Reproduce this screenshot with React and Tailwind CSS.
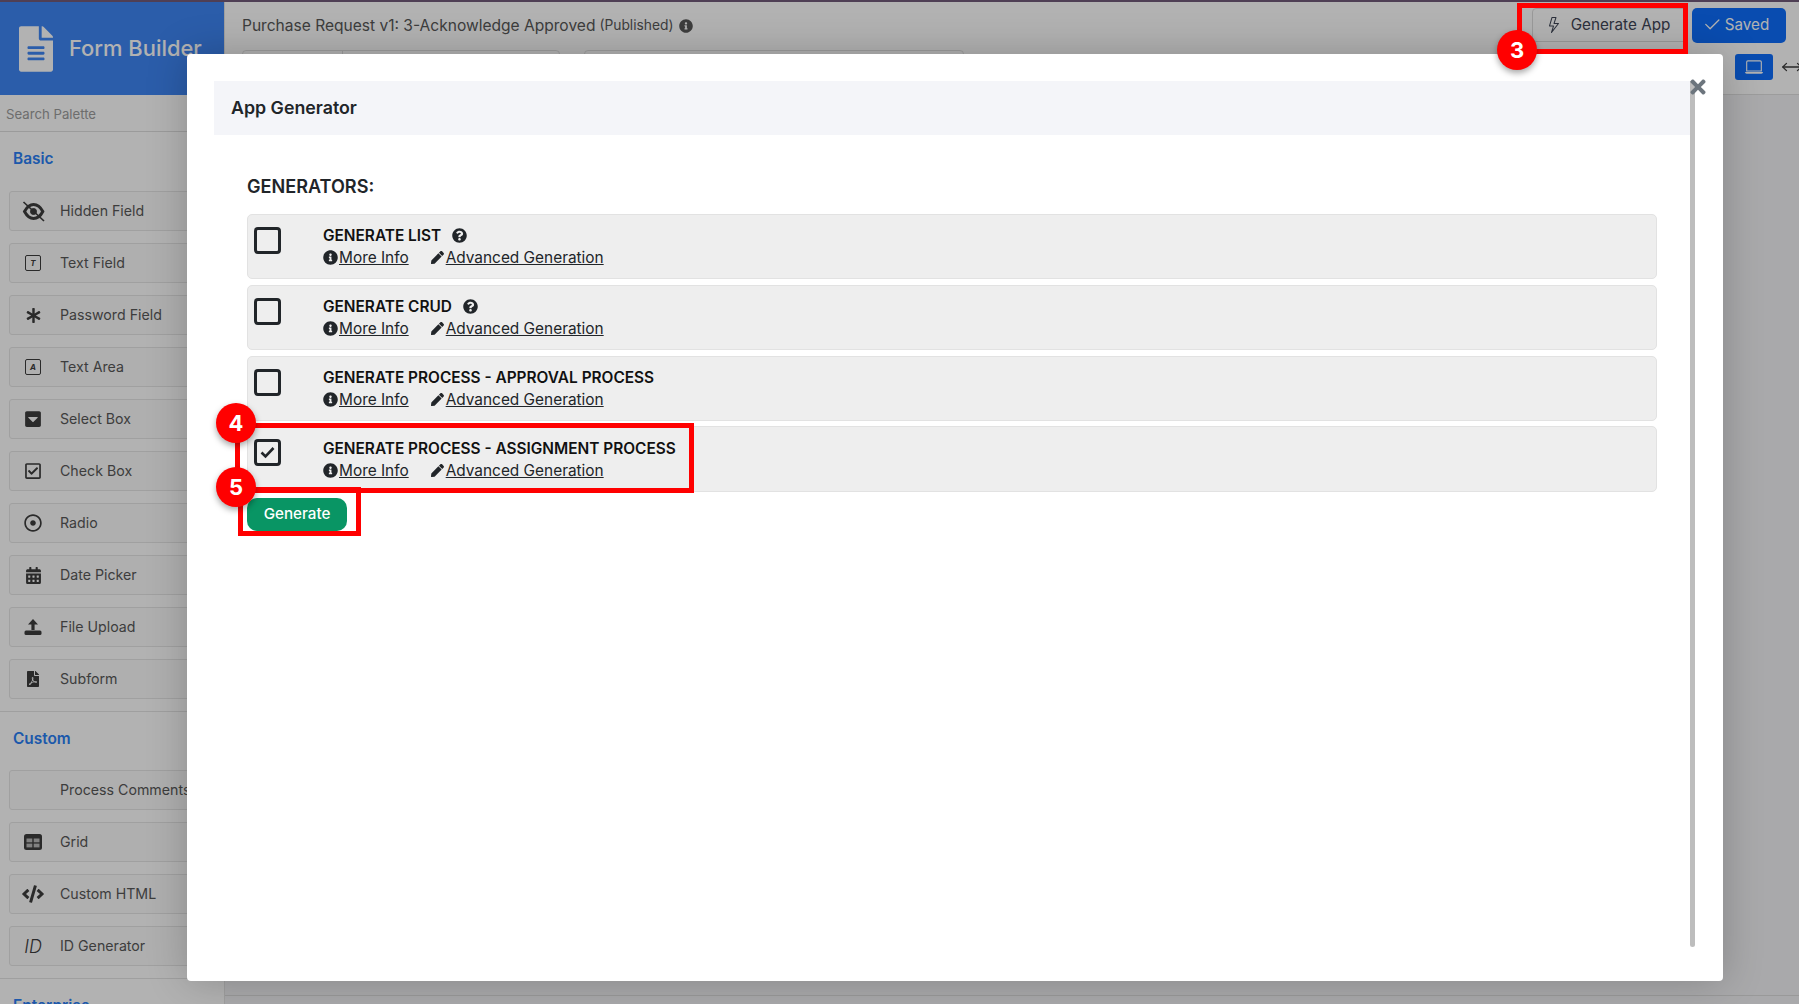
import React from 'react';
import {
  FaFileAlt, FaAsterisk, FaCaretSquareDown, FaRegCheckSquare, FaRegDotCircle,
  FaCalendarAlt, FaFilePdf, FaCode, FaInfoCircle, FaQuestionCircle, FaPen, FaTimes,
} from 'react-icons/fa';
import { BsLightning, BsCheck2, BsLaptop } from 'react-icons/bs';
import { MoveHorizontal } from 'lucide-react';

const BoxLetter = ({ letter }) => (
  <span className="w-[16px] h-[16px] border-[1.5px] border-[#3d3d3d] rounded-[2px] flex items-center justify-center text-[8px] font-bold italic text-[#3d3d3d]">
    {letter}
  </span>
);

const HiddenIcon = () => (
  <svg width="23" height="21" viewBox="0 0 23 21" fill="none" stroke="#3d3d3d">
    <path d="M2.5 10.5 C5.5 5 8.5 3.5 11.5 3.5 C14.5 3.5 18 5 20.8 10.5 C18 16 14.5 17.5 11.5 17.5 C8.5 17.5 5.5 16 2.5 10.5 Z" strokeWidth="3" />
    <circle cx="11.5" cy="10.5" r="3" fill="#3d3d3d" strokeWidth="1" />
    <path d="M1.5 1 L22 20" strokeWidth="1.7" />
  </svg>
);

const UploadIcon = () => (
  <svg width="18" height="18" viewBox="0 0 18 18" fill="#3d3d3d">
    <path d="M9 1 L14 6.5 H10.6 V12 H7.4 V6.5 H4 Z" />
    <rect x="0.5" y="12.5" width="17" height="4.5" rx="1.5" />
  </svg>
);

const GridIcon = () => (
  <svg width="18" height="16" viewBox="0 0 18 16">
    <rect width="18" height="16" rx="2.5" fill="#3d3d3d" />
    <rect x="2.5" y="4.5" width="5.8" height="3.8" fill="#b9b9b9" />
    <rect x="9.7" y="4.5" width="5.8" height="3.8" fill="#b9b9b9" />
    <rect x="2.5" y="9.6" width="5.8" height="3.8" fill="#b9b9b9" />
    <rect x="9.7" y="9.6" width="5.8" height="3.8" fill="#b9b9b9" />
  </svg>
);

const basicItems = [
  { label: 'Hidden Field', icon: <HiddenIcon /> },
  { label: 'Text Field', icon: <BoxLetter letter="T" /> },
  { label: 'Password Field', icon: <FaAsterisk size={15} /> },
  { label: 'Text Area', icon: <BoxLetter letter="A" /> },
  { label: 'Select Box', icon: <FaCaretSquareDown size={18} /> },
  { label: 'Check Box', icon: <FaRegCheckSquare size={18} /> },
  { label: 'Radio', icon: <FaRegDotCircle size={18} /> },
  { label: 'Date Picker', icon: <FaCalendarAlt size={17} /> },
  { label: 'File Upload', icon: <UploadIcon /> },
  { label: 'Subform', icon: <FaFilePdf size={16} /> },
];

const customItems = [
  { label: 'Process Comments', icon: null },
  { label: 'Grid', icon: <GridIcon /> },
  { label: 'Custom HTML', icon: <FaCode size={22} /> },
  { label: 'ID Generator', icon: <span className="text-[18px] italic font-light">ID</span> },
];

const generators = [
  { title: 'GENERATE LIST', help: true },
  { title: 'GENERATE CRUD', help: true },
  { title: 'GENERATE PROCESS - APPROVAL PROCESS' },
  { title: 'GENERATE PROCESS - ASSIGNMENT PROCESS', checked: true },
];

const PaletteItem = ({ item }) => (
  <div className="h-[40px] w-[220px] shrink-0 mb-3 ml-[9px] flex items-center border border-[#e6e6e6] bg-[#fbfbfb] rounded-[3px] text-[#585858] text-[14.2px] whitespace-nowrap">
    <span className="w-[46px] mr-[4px] flex justify-center text-[#3d3d3d]">{item.icon}</span>
    {item.label}
  </div>
);

const Sidebar = () => (
  <aside className="w-[225px] shrink-0 flex flex-col bg-white border-r border-[#e4e4e4] overflow-hidden">
    <div className="h-[93px] shrink-0 bg-[#3e86f4] flex items-center pl-[19px] gap-[16px] text-white">
      <FaFileAlt className="w-[34px] h-[46px] text-white" />
      <span className="text-[21.9px] font-medium whitespace-nowrap">Form Builder</span>
    </div>
    <div className="h-[37px] shrink-0 border-b border-[#dedede] flex items-center pl-[6px] pt-[3px] text-[13.2px] text-[#9c9c9c]">
      Search Palette
    </div>
    <div className="h-[59px] shrink-0 flex items-center pl-[13px] pb-[5px] text-[15.4px] font-semibold text-[#2a7ff5]">Basic</div>
    {basicItems.map(item => <PaletteItem key={item.label} item={item} />)}
    <div className="border-t border-[#e4e4e4] h-[59px] shrink-0 flex items-center pl-[13px] pb-[5px] text-[15.4px] font-semibold text-[#2a7ff5]">Custom</div>
    {customItems.map(item => <PaletteItem key={item.label} item={item} />)}
    <div className="border-t border-[#e4e4e4] pt-[15px] pl-[13px] text-[15.4px] font-semibold text-[#2a7ff5]">Enterprise</div>
  </aside>
);

const TopBar = () => (
  <div className="h-[93px] shrink-0 border-b border-[#e0e0e0] bg-white pl-[17px] pr-[13px] relative">
    <div className="flex items-start justify-between pt-[6px]">
      <div className="pt-[6px] flex items-center text-[15.55px] text-[#585858]">
        Purchase Request v1: 3-Acknowledge Approved
        <span className="text-[13.8px] ml-[4px]">(Published)</span>
        <FaInfoCircle size={14} className="ml-[5px]" />
      </div>
      <div className="flex gap-[5px]">
        <button className="h-[34px] w-[155px] border border-[#dcdcdc] rounded-[4px] flex items-center justify-center gap-[9px] pr-[3px] text-[15.25px] text-[#3f4656]">
          <BsLightning size={16} />
          Generate App
        </button>
        <button className="h-[35px] w-[94px] bg-[#0d6efd] rounded-[5px] flex items-center justify-center gap-[3px] pr-[7px] pb-[1px] text-[15.2px] text-white">
          <BsCheck2 size={20} />
          Saved
        </button>
      </div>
    </div>
    <div className="flex gap-[24px] mt-[7px]">
      <div className="h-[30px] w-[318px] border border-[#e0e0e0] rounded-[4px]">
        <div className="h-full w-[100px] border-r border-[#e0e0e0]" />
      </div>
      <div className="h-[30px] w-[380px] border border-[#e0e0e0] rounded-[4px]" />
    </div>
    <div className="absolute top-[52px] left-[1510px] flex items-center gap-[8px]">
      <span className="w-[38px] h-[26px] shrink-0 bg-[#0d6efd] rounded-[3px] flex items-center justify-center text-white">
        <BsLaptop size={18} />
      </span>
      <MoveHorizontal size={22} strokeWidth={1.4} className="shrink-0 text-[#3d3d3d]" />
    </div>
  </div>
);

const GeneratorRow = ({ gen, last }) => (
  <div className={`flex border border-[#e2e2e2] bg-[#eeeeee] rounded-[5px] pl-[6px] pt-[12px] ${last ? 'h-[66px] -mt-[1px]' : 'h-[65px]'}`}>
    <span className="w-[27px] h-[27px] border-[3px] border-[#212529] rounded-[4px] flex items-center justify-center text-[#212529]">
      {gen.checked && (
        <svg width="15" height="13" viewBox="0 0 15 13" fill="none" stroke="currentColor" strokeWidth="2.6">
          <path d="M1.5 6.5 L5.5 10.5 L13.5 2" />
        </svg>
      )}
    </span>
    <div className={`ml-[42px] text-[#212529] ${last ? '-mt-[1px]' : '-mt-[2px]'}`}>
      <div className="flex items-center h-[22px] text-[15.4px] font-semibold text-[#111]">
        {gen.title}
        {gen.help && <FaQuestionCircle size={15} className="ml-[11px] -mt-[1px] text-[#212529]" />}
      </div>
      <div className="flex items-center h-[21px] text-[15.4px]">
        <FaInfoCircle size={15} />
        <span className="underline ml-[1px]">More Info</span>
        <FaPen size={13} className="ml-[22px]" />
        <span className="underline ml-[2px]">Advanced Generation</span>
      </div>
    </div>
  </div>
);

const Modal = () => (
  <div className="absolute left-[187px] top-[54px] w-[1536px] h-[927px] bg-white rounded-[4px] shadow-[0_0_40px_rgba(0,0,0,0.22)] pt-[27px] pl-[27px] pr-[28px] flex">
    <div className="flex-1">
      <div className="h-[54px] bg-[#f4f5f9] flex items-center pl-[17px] pt-[1px] text-[17.8px] font-semibold text-[#212529]">App Generator</div>
      <div className="pl-[33px] pr-[33px]">
        <div className="h-[79px] pt-[39px] text-[18.1px] font-semibold leading-[24px] text-[#212529]">GENERATORS:</div>
        <div className="flex flex-col gap-[6px]">
          {generators.map((gen, i) => <GeneratorRow key={gen.title} gen={gen} last={i === 3} />)}
        </div>
        <button className="mt-[6px] w-[100px] h-[33px] rounded-[10px] bg-[#099564] text-white text-[15.2px] font-medium">Generate</button>
      </div>
    </div>
    <div className="w-[5px] h-[866px] bg-[#bdbdbd] rounded-b-[3px]" />
    <FaTimes size={22} className="absolute right-[14px] top-[22px] text-[#6c757d]" />
  </div>
);

const Badge = ({ n, className }) => (
  <span className={`absolute w-[40px] h-[40px] rounded-full bg-[#ff0000] text-white text-[22px] font-bold flex items-center justify-center shadow-[0_3px_6px_rgba(0,0,0,0.35)] ${className}`}>
    {n}
  </span>
);

export default function App() {
  return (
    <div className="relative w-full h-screen overflow-hidden bg-[#f3f3f5] font-['Inter',sans-serif]">
      <div className="h-[2px] bg-[#4f3f55]" />
      <div className="flex h-[1002px]">
        <Sidebar />
        <div className="flex-1 min-w-0 flex flex-col">
          <TopBar />
          <div className="flex-1" />
          <div className="h-[9px] border-t border-[#dcdcdc]" />
        </div>
      </div>
      <div className="absolute inset-0 top-[2px] bg-black/30" />
      <Modal />
      {/* red annotation boxes */}
      <div className="absolute left-[1517px] top-[3px] w-[171px] h-[51px] border-[5px] border-[#ff0000]" />
      <div className="absolute left-[235px] top-[423px] w-[459px] h-[70px] border-[5px] border-[#ff0000]" />
      <div className="absolute left-[238px] top-[487px] w-[123px] h-[49px] border-[5px] border-[#ff0000]" />
      <Badge n="3" className="left-[1497px] top-[30px]" />
      <Badge n="4" className="left-[216px] top-[403px]" />
      <Badge n="5" className="left-[216px] top-[467px]" />
    </div>
  );
}
